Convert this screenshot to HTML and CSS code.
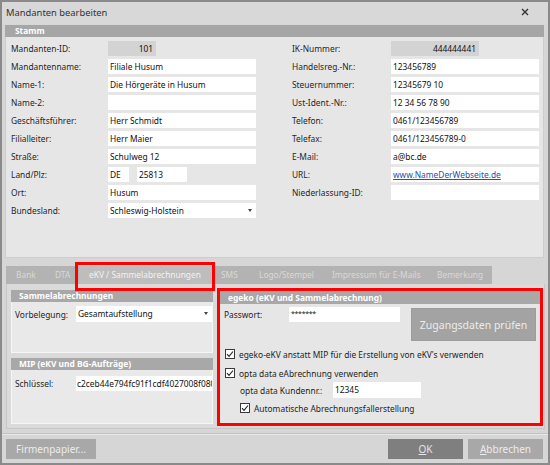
FILE: index.html
```html
<!DOCTYPE html>
<html lang="de">
<head>
<meta charset="utf-8">
<title>Mandanten bearbeiten</title>
<link rel="stylesheet" href="styles.css">
</head>
<body>
<div class="window">
  <div class="titlebar">
    <span class="title">Mandanten bearbeiten</span>
    <svg class="close" width="8" height="8" viewBox="0 0 8 8"><path d="M1 1 L7 7 M7 1 L1 7" stroke="#333" stroke-width="1.4" fill="none"/></svg>
  </div>

  <section class="stamm">
    <div class="bar">Stamm</div>
    <div class="stamm-body">
      <div class="col left">
        <div class="row"><span class="lbl">Mandanten-ID:</span><span class="field ro w-id">101</span></div>
        <div class="row"><span class="lbl">Mandantenname:</span><span class="field">Filiale Husum</span></div>
        <div class="row"><span class="lbl">Name-1:</span><span class="field">Die Hörgeräte in Husum</span></div>
        <div class="row"><span class="lbl">Name-2:</span><span class="field"></span></div>
        <div class="row"><span class="lbl">Geschäftsführer:</span><span class="field">Herr Schmidt</span></div>
        <div class="row"><span class="lbl">Filialleiter:</span><span class="field">Herr Maier</span></div>
        <div class="row"><span class="lbl">Straße:</span><span class="field">Schulweg 12</span></div>
        <div class="row"><span class="lbl">Land/Plz:</span><span class="field w-land">DE</span><span class="field w-plz">25813</span></div>
        <div class="row"><span class="lbl">Ort:</span><span class="field">Husum</span></div>
        <div class="row"><span class="lbl">Bundesland:</span><span class="field combo">Schleswig-Holstein<span class="arrow"></span></span></div>
      </div>
      <div class="col right">
        <div class="row"><span class="lbl">IK-Nummer:</span><span class="field ro w-ik">444444441</span></div>
        <div class="row"><span class="lbl">Handelsreg.-Nr.:</span><span class="field">123456789</span></div>
        <div class="row"><span class="lbl">Steuernummer:</span><span class="field">12345679 10</span></div>
        <div class="row"><span class="lbl">Ust-Ident.-Nr.:</span><span class="field">12 34 56 78 90</span></div>
        <div class="row"><span class="lbl">Telefon:</span><span class="field">0461/123456789</span></div>
        <div class="row"><span class="lbl">Telefax:</span><span class="field">0461/123456789-0</span></div>
        <div class="row"><span class="lbl">E-Mail:</span><span class="field">a@bc.de</span></div>
        <div class="row"><span class="lbl">URL:</span><span class="field"><span class="link">www.NameDerWebseite.de</span></span></div>
        <div class="row"><span class="lbl">Niederlassung-ID:</span><span class="field"></span></div>
      </div>
    </div>
  </section>

  <section class="tabs-area">
    <div class="tabstrip">
      <span class="tab t-bank">Bank</span>
      <span class="tab t-dta">DTA</span>
      <span class="tab t-ekv active">eKV / Sammelabrechnungen</span>
      <span class="tab t-sms">SMS</span>
      <span class="tab t-logo">Logo/Stempel</span>
      <span class="tab t-imp">Impressum für E-Mails</span>
      <span class="tab t-bem">Bemerkung</span>
    </div>
    <div class="tab-highlight"></div>
    <div class="tabpage">
      <div class="leftcol">
        <div class="panel p-sammel">
          <div class="pbar">Sammelabrechnungen</div>
          <div class="pbody">
            <div class="prow"><span class="plbl">Vorbelegung:</span><span class="field combo w-p">Gesamtaufstellung<span class="arrow"></span></span></div>
          </div>
        </div>
        <div class="panel p-mip">
          <div class="pbar">MIP (eKV und BG-Aufträge)</div>
          <div class="pbody">
            <div class="prow"><span class="plbl">Schlüssel:</span><span class="field w-p clip">c2ceb44e794fc91f1cdf4027008f080</span></div>
          </div>
        </div>
      </div>
      <div class="egeko">
        <div class="ebar">egeko (eKV und Sammelabrechnung)</div>
        <div class="ebody">
          <div class="etop">
            <span class="elbl">Passwort:</span>
            <span class="field w-pw pw">*******</span>
            <span class="btn btn-check">Zugangsdaten prüfen</span>
          </div>
          <div class="cbrow r1"><span class="cb"><svg width="8" height="8" viewBox="0 0 8 8"><path d="M1 4.2 L3 6.3 L7 1.5" stroke="#222" stroke-width="1.1" fill="none"/></svg></span>egeko-eKV anstatt MIP für die Erstellung von eKV's verwenden</div>
          <div class="cbrow r2"><span class="cb"><svg width="8" height="8" viewBox="0 0 8 8"><path d="M1 4.2 L3 6.3 L7 1.5" stroke="#222" stroke-width="1.1" fill="none"/></svg></span>opta data eAbrechnung verwenden</div>
          <div class="kdrow"><span class="klbl">opta data Kundennr.:</span><span class="field w-kd">12345</span></div>
          <div class="cbrow r3"><span class="cb"><svg width="8" height="8" viewBox="0 0 8 8"><path d="M1 4.2 L3 6.3 L7 1.5" stroke="#222" stroke-width="1.1" fill="none"/></svg></span>Automatische Abrechnungsfallerstellung</div>
        </div>
      </div>
    </div>
  </section>

  <footer class="footer">
    <span class="btn b-firm">Firmenpapier...</span>
    <span class="spacer"></span>
    <span class="btn b-ok"><u>O</u>K</span>
    <span class="btn b-abb"><u>A</u>bbrechen</span>
  </footer>
</div>
</body>
</html>
```

FILE: styles.css
```css
* { box-sizing: border-box; }
html, body { margin: 0; padding: 0; }
body {
  width: 550px;
  height: 465px;
  font-family: "Noto Sans", "Open Sans", sans-serif;
  font-size: 8.4px;
  color: #1e1e1e;
  background: #d6d6d6;
}
.window {
  width: 550px;
  height: 465px;
  border: 2px solid #8a8a8a;
  background: #d6d6d6;
  display: flex;
  flex-direction: column;
  position: relative;
}
.titlebar {
  height: 22px;
  display: flex;
  align-items: center;
  justify-content: space-between;
  padding: 0 19px 0 4px;
  background: #d8d8d8;
}
.title { font-size: 9.4px; color: #333; position: relative; top: -1px; }
.close { display: block; position: relative; top: -1px; }

/* Stamm */
.stamm { margin: 1px 4px 0 3px; }
.bar {
  height: 12px;
  line-height: 12px;
  background: #a6a6a6;
  color: #fff;
  font-weight: bold;
  padding-left: 10px;
}
.stamm-body {
  height: 221px;
  background: #e6e6e6;
  border: 1px solid #cdcdcd;
  border-top: none;
  display: flex;
  padding: 4px 0 0 5px;
}
.col { display: flex; flex-direction: column; gap: 3px; }
.col.right { margin-left: 36px; }
.row { display: flex; align-items: center; height: 15px; }
.left .lbl { width: 97px; }
.right .lbl { width: 99px; }
.lbl { color: #262626; }
.field {
  display: block;
  width: 148px;
  height: 15px;
  line-height: 15px;
  background: #fff;
  padding-left: 2px;
  color: #111;
  white-space: nowrap;
  position: relative;
}
.field.ro { background: #d3d3d3; text-align: right; padding: 0 3px 0 0; }
.w-id { width: 48px; }
.w-ik { width: 88px; }
.w-land { width: 21px; }
.w-plz { width: 50px; margin-left: 8px; }
.link { color: #2650b0; text-decoration: underline; }
.arrow {
  position: absolute;
  right: 4px;
  top: 6px;
  width: 0;
  height: 0;
  border-left: 2.5px solid transparent;
  border-right: 2.5px solid transparent;
  border-top: 3px solid #444;
}

/* Tabs */
.tabs-area {
  margin: 8px 3px 0 4px;
  position: relative;
}
.tabstrip {
  display: flex;
  height: 18px;
  align-items: stretch;
}
.tab {
  background: #b3b3b3;
  color: #d9d9d9;
  line-height: 18px;
  padding: 0 9px 0 10px;
  white-space: nowrap;
}
.t-bank { width: 39px; }
.t-dta { width: 34px; }
.t-ekv { width: 134px; }
.t-sms { width: 36px; padding-left: 8px; }
.t-logo { width: 75px; }
.t-imp { width: 105px; padding-left: 8px; }
.t-bem { width: 63px; padding-left: 8px; }
.tab.active { background: #bdbdbd; color: #f2f2f2; }
.tab-highlight {
  position: absolute;
  left: 69px;
  top: -4px;
  width: 140px;
  height: 29px;
  border: 3px solid #ff0000;
  pointer-events: none;
}
.tabpage {
  height: 145px;
  background: #dadada;
  border: 1px solid #c6c6c6;
  border-top: none;
  display: flex;
  padding: 4px 0 0 4px;
}
.leftcol { width: 202px; display: flex; flex-direction: column; gap: 5px; margin-top: 2px; }
.pbar {
  height: 12px;
  line-height: 12px;
  background: #a8a8a8;
  color: #fff;
  font-weight: bold;
  padding-left: 8px;
}
.pbody {
  background: #e9e9e9;
  border: 1px solid #f6f6f6;
  border-top: none;
  padding: 3px 0 0 3px;
}
.p-sammel .pbody { height: 51px; padding-top: 4px; }
.p-mip .pbody { height: 54px; padding-top: 5px; }
.prow { display: flex; align-items: center; height: 16px; }
.plbl { width: 61px; }
.w-p { width: 136px; height: 16px; line-height: 16px; }
.clip { overflow: hidden; width: 136px; padding-left: 1px; height: 15px; line-height: 15px; }

/* egeko box */
.egeko {
  width: 326px;
  height: 138px;
  margin-left: 4px;
  border: 3px solid #ff0000;
  background: #e6e6e6;
}
.ebar {
  height: 13px;
  line-height: 13px;
  background: #a8a8a8;
  color: #fff;
  font-weight: bold;
  padding-left: 8px;
}
.ebody { padding: 3px 0 0 4px; }
.etop { display: flex; align-items: flex-start; height: 34px; }
.elbl { width: 65px; line-height: 15px; }
.w-pw { width: 111px; }
.pw { font-size: 7px; line-height: 13px; letter-spacing: -0.3px; }
.btn {
  display: flex;
  align-items: center;
  justify-content: center;
  background: #a8a8a8;
  color: #ececec;
  white-space: nowrap;
}
.btn-check {
  width: 125px;
  height: 33px;
  margin-left: 11px;
  margin-top: 1px;
  font-size: 10.5px;
  background: #a3a3a3;
  border: 1px solid #9c9c9c;
}
.cbrow { display: flex; align-items: center; height: 14px; }
.cb {
  width: 10px;
  height: 10px;
  border: 1px solid #3a3a3a;
  background: #fff;
  display: flex;
  align-items: center;
  justify-content: center;
  margin-right: 4px;
  flex: none;
}
.cbrow.r1 { margin-top: 6px; margin-left: 1px; }
.cbrow.r2 { margin-top: 5px; margin-left: 1px; }
.kdrow { display: flex; align-items: center; height: 16px; margin-top: 2px; padding-left: 16px; }
.klbl { width: 93px; }
.w-kd { width: 88px; height: 16px; line-height: 16px; }
.cbrow.r3 { margin-top: 3px; margin-left: 16px; }

/* footer */
.footer {
  margin-top: 4px;
  border-top: 1px solid #c2c2c2;
  box-shadow: inset 0 1px 0 #e8e8e8;
  display: flex;
  align-items: center;
  padding: 5px 5px 0 4px;
  gap: 5px;
}
.footer .btn { height: 20px; font-size: 10px; }
.b-firm { width: 90px; }
.spacer { flex: 1; }
.b-ok { width: 75px; background: #7f7f7f; color: #e4e4e4; }
.b-abb { width: 75px; }
.btn u { text-decoration: underline; }
```
